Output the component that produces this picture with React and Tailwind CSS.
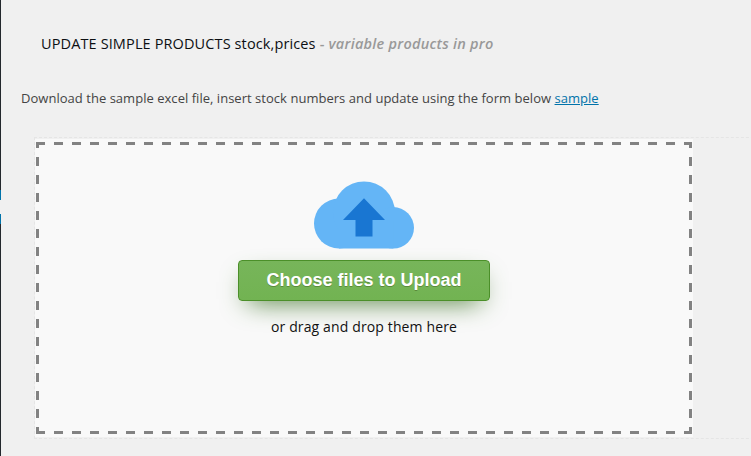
const dashes =
  "bg-[repeating-linear-gradient(90deg,#828282_0_9px,transparent_9px_18px),repeating-linear-gradient(90deg,#828282_0_9px,transparent_9px_18px),repeating-linear-gradient(180deg,#828282_0_6px,transparent_6px_15px,#828282_15px_18px),repeating-linear-gradient(180deg,#828282_0_6px,transparent_6px_15px,#828282_15px_18px)] bg-no-repeat bg-[length:100%_3px,100%_3px,3px_100%,3px_100%] bg-[position:0_0,0_100%,0_0,100%_0]";

function CloudUpload() {
  return (
    <svg className="mt-[39px] block h-[68px] w-[100px]" viewBox="0 0 100 68">
      <g fill="#64b5f6">
        <circle cx="25" cy="42.500" r="25" />
        <circle cx="50" cy="31.500" r="31" />
        <circle cx="79.300" cy="46.800" r="20.700" />
        <path d="M25 40H79.300V67.500H25Z" />
      </g>
      <path fill="#1976d2" d="M50 17.300L71 39H58.500V55.500H41.500V39H29Z" />
    </svg>
  );
}

export default function App() {
  return (
    <div className="flex h-[456px] w-[751px] overflow-hidden bg-[#f0f0f0] font-['Open_Sans','Noto_Sans',sans-serif]">
      <aside className="flex w-px shrink-0 flex-col bg-[#23282d]">
        <div className="mt-[190px] h-[10px] bg-[#0073aa]" />
        <div className="h-[14px] bg-[#f0f0f0]" />
        <div className="h-[10px] bg-[#0073aa]" />
      </aside>
      <main className="min-w-0 flex-1">
        <h4 className="ml-10 mt-[34px] h-5 whitespace-nowrap text-[14.5px] font-medium leading-5 text-[#0c0f12]">
          <span className="tracking-[0.12px]">UPDATE SIMPLE PRODUCTS stock,prices</span>
          <span className="font-semibold tracking-[0.25px] text-[#999]"> - <i>variable products in pro</i></span>
        </h4>
        <p className="ml-5 mt-[34px] h-5 whitespace-nowrap text-[13px] leading-5 tracking-[0.03px] text-[#444]">
          Download the sample excel file, insert stock numbers and update using the form below{" "}
          <a className="text-[#0073aa] underline" href="#sample">sample</a>
        </p>
        <section className="ml-[33px] mt-[29px] h-[302px] w-[760px] border border-dashed border-[#e5e5e5] pt-px">
          <div className="h-[298px] w-[658px] bg-[#f9f9f9] pl-px pt-[3px]">
            <div className={`flex h-[292px] w-[656px] flex-col items-center ${dashes}`}>
              <CloudUpload />
              <button className="mt-[11px] h-[41px] w-[252px] rounded-[4px] border border-[#4b8f29] bg-gradient-to-b from-[#77b55a] to-[#72b352] font-['Liberation_Sans',Arial,sans-serif] text-[18px] font-bold leading-[39px] text-white shadow-[0_10px_27px_-10px_#3e7327] [text-shadow:0_1px_0_#5b8a3c]">
                Choose files to Upload
              </button>
              <p className="mt-4 whitespace-nowrap text-[14px] leading-5 tracking-[0.13px] text-[#111]">or drag and drop them here</p>
            </div>
          </div>
        </section>
      </main>
    </div>
  );
}
